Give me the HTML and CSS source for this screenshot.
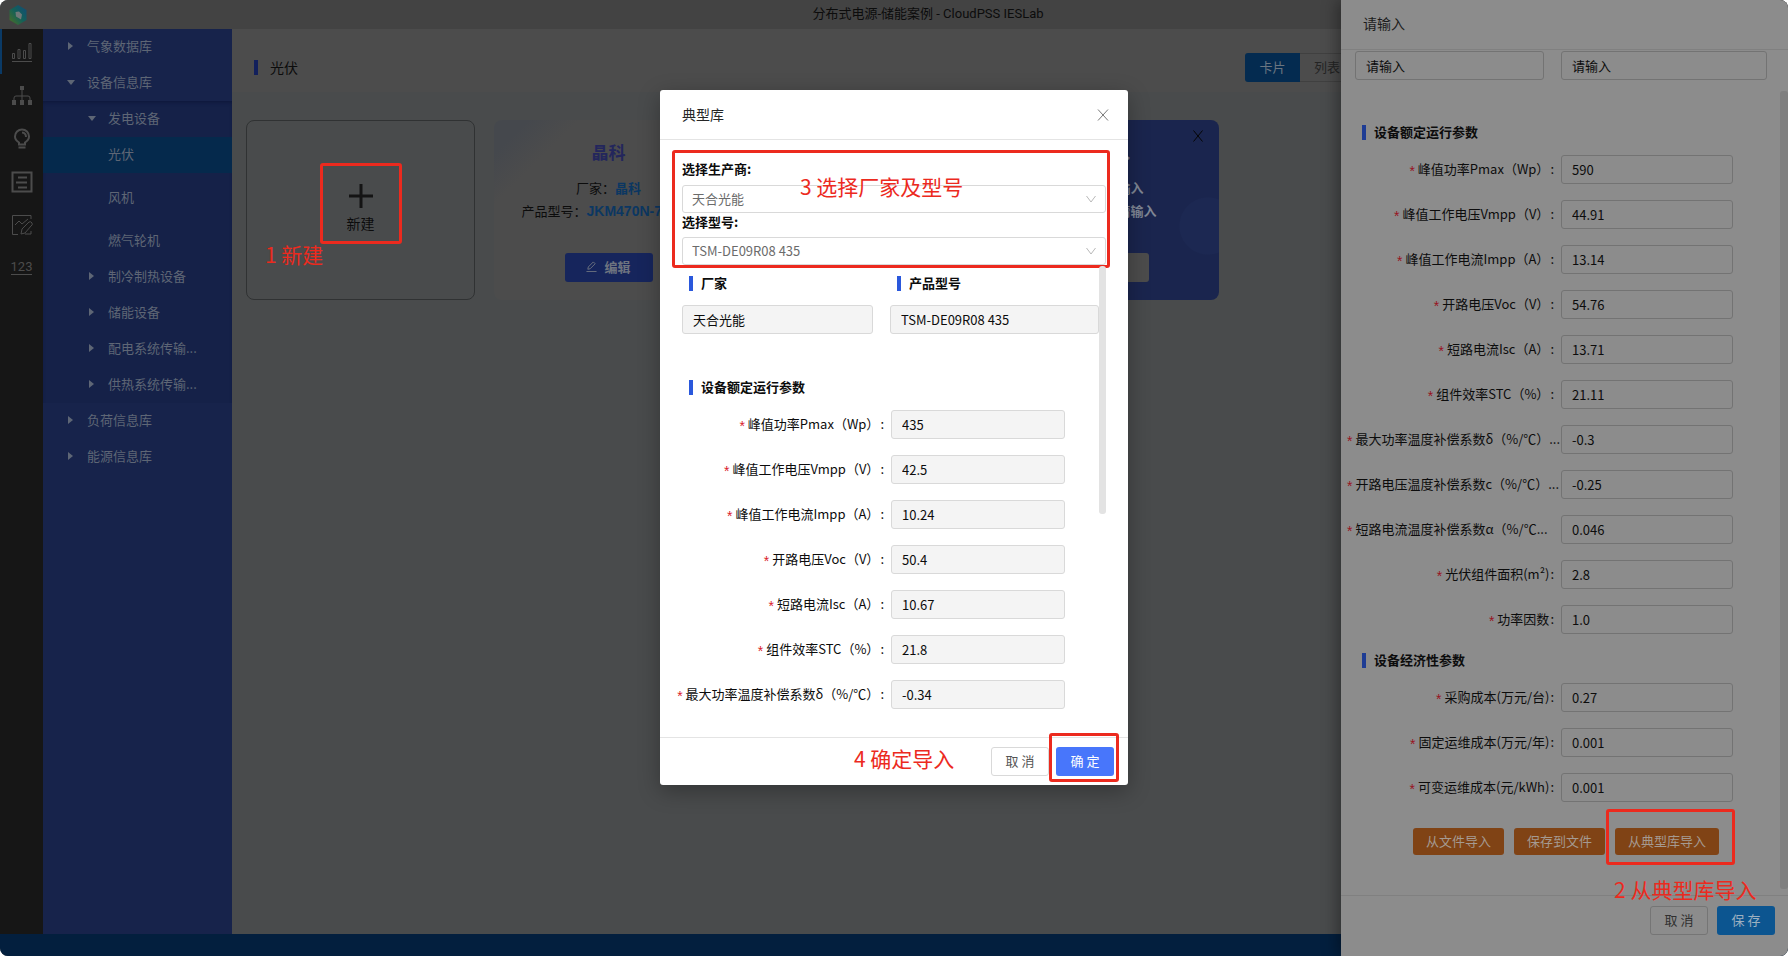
FILE: index.html
```html
<!DOCTYPE html>
<html lang="zh-CN">
<head>
<meta charset="utf-8">
<title>分布式电源-储能案例 - CloudPSS IESLab</title>
<link rel="stylesheet" href="styles.css">
</head>
<body>
<div class="window">
  <header class="titlebar">
    <svg class="logo" viewBox="0 0 18 20" aria-hidden="true">
      <defs><linearGradient id="lg" x1="1" y1="0" x2="0" y2="1"><stop offset="0" stop-color="#124a78"/><stop offset=".5" stop-color="#146058"/><stop offset="1" stop-color="#4f7020"/></linearGradient></defs>
      <path d="M9 0 17.500 5v10L9 20 .5 15V5z" fill="url(#lg)"/>
      <path d="M6.500 7 10 6.500l3 3-1 5-5-3z" fill="#6f7878"/>
    </svg>
    <h1 class="window-title">分布式电源-储能案例 - CloudPSS IESLab</h1>
  </header>

  <div class="workspace">
    <nav class="rail" aria-label="模块">
      <button class="rail-item current" aria-label="数据管理"><svg viewBox="0 0 22 22"><path d="M1.500 12.500h2v5h-2zM7 8.500h2v9H7zM12.500 9.500h2v8h-2zM18 2.500h2v15h-2zM1 20.500h20"/></svg></button>
      <button class="rail-item" aria-label="拓扑编辑"><svg viewBox="0 0 22 22"><path d="M11 4v12M3 16v-3q0-2 2-2h12q2 0 2 2v3"/><path class="fill" d="M9 1h4v4H9zM1 15h4v5H1zM9 15h4v5H9zM17 15h4v5h-4z"/></svg></button>
      <button class="rail-item" aria-label="方案"><svg class="bold" viewBox="0 0 22 22"><path d="M8 16.500v-2Q4 12 4 8.500a7 7 0 0 1 14 0q0 3.500-4 6v2zM11 4.500q4 .5 4 4.500M7.500 19.500h7"/></svg></button>
      <button class="rail-item" aria-label="报表"><svg class="bold" viewBox="0 0 22 22"><path d="M1.500 1.500h19v19h-19zM7 6.500h9M5 11.500h11M7 16.500h9"/></svg></button>
      <button class="rail-item" aria-label="评估"><svg viewBox="0 0 22 22"><path d="M20 5V1.500H1.500v19H7M4 11l4-4 3 3 6-5M10 20l1-5 7-7q2-1 3 1t-1 3l-6 7zM14 20h6v-3"/></svg></button>
      <button class="rail-item" aria-label="数值"><span class="digits">123</span></button>
    </nav>

    <nav class="menu" aria-label="信息库">
      <a class="menu-item" href="#"><i class="caret"></i>气象数据库</a>
      <a class="menu-item" href="#"><i class="caret open"></i>设备信息库</a>
      <div class="submenu">
        <a class="menu-item" href="#"><i class="caret open"></i>发电设备</a>
        <div class="leaves">
          <a class="menu-item active" href="#">光伏</a>
          <a class="menu-item" href="#">风机</a>
          <a class="menu-item" href="#">燃气轮机</a>
        </div>
        <a class="menu-item" href="#"><i class="caret"></i>制冷制热设备</a>
        <a class="menu-item" href="#"><i class="caret"></i>储能设备</a>
        <a class="menu-item" href="#"><i class="caret"></i>配电系统传输...</a>
        <a class="menu-item" href="#"><i class="caret"></i>供热系统传输...</a>
      </div>
      <a class="menu-item" href="#"><i class="caret"></i>负荷信息库</a>
      <a class="menu-item" href="#"><i class="caret"></i>能源信息库</a>
    </nav>

    <main class="content">
      <div class="content-head">
        <h2 class="page-title">光伏</h2>
        <div class="view-switch">
          <button class="view on">卡片</button><button class="view">列表</button>
        </div>
      </div>
      <div class="cards">
        <button class="card card-new">
          <svg class="plus" viewBox="0 0 24 24"><path d="M12 0v24M0 12h24"/></svg>
          新建
          <span class="mark mark-new"></span>
          <span class="note note-new">1 新建</span>
        </button>
        <article class="card card-light">
          <h3 class="card-name">晶科</h3>
          <p class="card-line">厂家：<b>晶科</b></p>
          <p class="card-line model">产品型号：<b>JKM470N-7</b></p>
          <button class="card-edit"><svg viewBox="0 0 12 12"><path d="M2 9l.5-2.500L8 1l2 2-5.500 5.500zM.5 11.500h11"/></svg>编辑</button>
        </article>
        <article class="card card-selected">
          <button class="card-close" aria-label="删除"><svg viewBox="0 0 12 12"><path d="M1.500.5l9 11M10.500.5l-9 11"/></svg></button>
          <h3 class="card-name">请输入</h3>
          <p class="card-line">厂家：<b>请输入</b></p>
          <p class="card-line">产品型号：<b>请输入</b></p>
          <button class="card-edit">编辑</button>
        </article>
      </div>
    </main>
  </div>
  <footer class="statusbar"></footer>

  <aside class="drawer">
    <h2 class="drawer-title">请输入</h2>
    <form class="drawer-body">
      <div class="pair">
        <input class="field" aria-label="厂家" value="请输入">
        <input class="field" aria-label="产品型号" value="请输入">
      </div>
      <h3 class="section">设备额定运行参数</h3>
      <div class="rows">
        <div class="row"><label for="d1">峰值功率Pmax（Wp）</label><input class="field" id="d1" value="590"></div>
        <div class="row"><label for="d2">峰值工作电压Vmpp（V）</label><input class="field" id="d2" value="44.91"></div>
        <div class="row"><label for="d3">峰值工作电流Impp（A）</label><input class="field" id="d3" value="13.14"></div>
        <div class="row"><label for="d4">开路电压Voc（V）</label><input class="field" id="d4" value="54.76"></div>
        <div class="row"><label for="d5">短路电流Isc（A）</label><input class="field" id="d5" value="13.71"></div>
        <div class="row"><label for="d6">组件效率STC（%）</label><input class="field" id="d6" value="21.11"></div>
        <div class="row"><label class="cut" for="d7">最大功率温度补偿系数δ（%/℃）...</label><input class="field" id="d7" value="-0.3"></div>
        <div class="row"><label class="cut" for="d8">开路电压温度补偿系数c（%/℃）...</label><input class="field" id="d8" value="-0.25"></div>
        <div class="row"><label class="cut" for="d9">短路电流温度补偿系数α（%/℃...</label><input class="field" id="d9" value="0.046"></div>
        <div class="row"><label for="d10">光伏组件面积(m²)</label><input class="field" id="d10" value="2.8"></div>
        <div class="row"><label for="d11">功率因数</label><input class="field" id="d11" value="1.0"></div>
      </div>
      <h3 class="section">设备经济性参数</h3>
      <div class="rows">
        <div class="row"><label for="e1">采购成本(万元/台)</label><input class="field" id="e1" value="0.27"></div>
        <div class="row"><label for="e2">固定运维成本(万元/年)</label><input class="field" id="e2" value="0.001"></div>
        <div class="row"><label for="e3">可变运维成本(元/kWh)</label><input class="field" id="e3" value="0.001"></div>
      </div>
      <div class="imports">
        <button type="button" class="import">从文件导入</button>
        <button type="button" class="import">保存到文件</button>
        <button type="button" class="import">从典型库导入<span class="mark mark-import"></span><span class="note note-import">2 从典型库导入</span></button>
      </div>
      <span class="scrollbar"></span>
    </form>
    <div class="drawer-foot">
      <button class="btn">取 消</button>
      <button class="btn primary">保 存</button>
    </div>
  </aside>

  <section class="modal" role="dialog" aria-labelledby="modal-title">
    <header class="modal-head">
      <h2 id="modal-title">典型库</h2>
      <button class="modal-close" aria-label="关闭"><svg viewBox="0 0 12 12"><path d="M1 .5l10 11M11 .5l-10 11"/></svg></button>
    </header>
    <div class="modal-body">
      <div class="pickers">
        <label class="pick-label" for="maker">选择生产商:</label>
        <div class="select"><select id="maker"><option>天合光能</option></select><svg viewBox="0 0 10 8"><path d="M.5 1 5 7l4.500-6"/></svg></div>
        <label class="pick-label" for="model">选择型号:</label>
        <div class="select"><select id="model"><option>TSM-DE09R08 435</option></select><svg viewBox="0 0 10 8"><path d="M.5 1 5 7l4.500-6"/></svg></div>
        <span class="mark mark-pick"></span>
        <span class="note note-pick">3 选择厂家及型号</span>
      </div>
      <div class="details">
        <div class="pair">
          <label class="section" for="m-maker">厂家</label>
          <label class="section" for="m-model">产品型号</label>
          <input class="field" id="m-maker" value="天合光能" readonly>
          <input class="field" id="m-model" value="TSM-DE09R08 435" readonly>
        </div>
        <h3 class="section">设备额定运行参数</h3>
        <div class="rows">
          <div class="row"><label for="m1">峰值功率Pmax（Wp）</label><input class="field" id="m1" value="435" readonly></div>
          <div class="row"><label for="m2">峰值工作电压Vmpp（V）</label><input class="field" id="m2" value="42.5" readonly></div>
          <div class="row"><label for="m3">峰值工作电流Impp（A）</label><input class="field" id="m3" value="10.24" readonly></div>
          <div class="row"><label for="m4">开路电压Voc（V）</label><input class="field" id="m4" value="50.4" readonly></div>
          <div class="row"><label for="m5">短路电流Isc（A）</label><input class="field" id="m5" value="10.67" readonly></div>
          <div class="row"><label for="m6">组件效率STC（%）</label><input class="field" id="m6" value="21.8" readonly></div>
          <div class="row"><label for="m7">最大功率温度补偿系数δ（%/℃）</label><input class="field" id="m7" value="-0.34" readonly></div>
        </div>
        <span class="scrollbar"></span>
      </div>
    </div>
    <footer class="modal-foot">
      <span class="note note-ok">4 确定导入</span>
      <button class="btn">取 消</button>
      <button class="btn primary">确 定<span class="mark mark-ok"></span></button>
    </footer>
  </section>
</div>
</body>
</html>
```
FILE: styles.css
```css
* { box-sizing: border-box; }
html, body { height: 100%; }
body {
  margin: 0;
  background: #fff;
  color: #0c0c0c;
  font: 13px/20px "Noto Sans CJK SC", "Noto Sans", sans-serif;
}
h1, h2, h3, p { margin: 0; font-size: inherit; font-weight: 400; }
button, input, select { font: inherit; color: inherit; margin: 0; }
button { padding: 0; border: 0; background: none; white-space: nowrap; }
a { color: inherit; text-decoration: none; }
svg { display: block; fill: none; stroke: currentColor; }

.window {
  position: relative;
  display: flex;
  flex-direction: column;
  height: 100vh;
  min-height: 956px;
  overflow: hidden;
  border-radius: 8px;
  background: #494b4c;
}

/* Title bar */
.titlebar {
  flex: none;
  display: flex;
  align-items: center;
  height: 29px;
  padding: 0 9px;
  background: #434343;
}
.logo { width: 18px; height: 20px; stroke: none; }
.window-title {
  flex: 1;
  padding: 0 0 2px 50px;
  text-align: center;
  line-height: 22px;
  font-family: Roboto, "Noto Sans CJK SC", sans-serif;
}

.workspace { flex: 1; display: flex; min-height: 0; }

/* Icon rail */
.rail { flex: none; width: 43px; background: #161616; color: #4c4c4c; }
.rail-item {
  display: flex;
  align-items: center;
  justify-content: center;
  width: 100%;
  height: 43px;
  border-left: 2px solid transparent;
  border-right: 2px solid transparent;
}
.rail-item.current { height: 45px; border-left-color: #0a3a66; }
.rail-item svg { width: 22px; height: 22px; }
.rail-item .bold { stroke-width: 2; }
.rail-item .fill { fill: currentColor; stroke: none; }
.digits { border-bottom: 1px solid; font: 13px/14px Roboto, sans-serif; }

/* Tree menu */
.menu { flex: none; width: 189px; background: #17234b; color: #5e6675; }
.menu-item {
  display: flex;
  align-items: center;
  gap: 14px;
  height: 36px;
  padding: 0 0 2px 25px;
}
.submenu { background: #152148; box-shadow: inset 0 3px 4px -2px #0d1638; }
.submenu .menu-item { padding-left: 46px; }
.leaves { display: flex; flex-direction: column; gap: 7px; }
.submenu .leaves .menu-item { padding-left: 65px; }
.leaves .active { background: #05294c; }
.caret {
  width: 5px;
  border-left: 5px solid;
  border-top: 4px solid transparent;
  border-bottom: 4px solid transparent;
}
.caret.open {
  width: 8px;
  margin: 0 -2px 0 -1px;
  border-left: 4px solid transparent;
  border-right: 4px solid transparent;
  border-top: 5px solid;
  border-bottom: 0;
}

/* Main area */
.content { flex: 1; min-width: 0; }
.content-head {
  display: flex;
  justify-content: space-between;
  align-items: center;
  height: 63px;
  padding: 14px 433px 0 22px;
  background: #4c4c4c;
}
.page-title { display: flex; align-items: center; gap: 12px; font-size: 14px; line-height: 18px; padding-bottom: 1px; }
.page-title::before { content: ""; width: 4px; height: 15px; background: #12205c; }
.view-switch { display: flex; }
.view {
  width: 55px;
  height: 29px;
  padding-bottom: 2px;
  border: 1px solid #404040;
  border-left: 0;
  color: #242424;
}
.view.on { border: 0; border-radius: 3px 0 0 3px; background: #042b50; color: #6a7580; }

.cards {
  display: grid;
  grid-template-columns: repeat(auto-fill, 229px);
  gap: 19px;
  padding: 28px 14px;
}
.card {
  position: relative;
  display: flex;
  flex-direction: column;
  align-items: center;
  height: 180px;
  border-radius: 8px;
}
.card-new {
  justify-content: center;
  gap: 5px;
  padding-bottom: 3px;
  border: 1px solid #303233;
  font-size: 14px;
}
.plus { width: 24px; height: 24px; stroke-width: 3; stroke: #141414; }
.card-light, .card-selected { padding: 20px 0 18px; }
.card-light { background: linear-gradient(135deg, #45484d 0 24px, #4c4c4c 60px); }
.card-selected {
  grid-column: 4;
  background: radial-gradient(circle at 218px 106px, #1c2852 0 28px, #1a254e 29px);
  color: #7f8694;
}
.card-name { margin-bottom: 13px; font-size: 17px; line-height: 24px; font-weight: 700; color: #23265c; }
.card-selected .card-name { color: inherit; }
.card-line { line-height: 22px; }
.card-line b { font-family: "Liberation Sans", "Noto Sans CJK SC", sans-serif; color: #0b3762; }
.card-line.model { width: 174px; white-space: nowrap; }
.card-line.model b { font-size: 14px; }
.card-selected b { color: inherit; }
.card-edit {
  display: flex;
  align-items: center;
  justify-content: center;
  gap: 7px;
  width: 88px;
  height: 29px;
  margin-top: auto;
  padding-bottom: 2px;
  border-radius: 3px;
  background: #16255c;
  color: #6e7480;
  font-weight: 700;
}
.card-edit svg { width: 11px; height: 11px; }
.card-selected .card-edit { background: #4c4c4c; color: #17234b; }
.card-close { position: absolute; top: 10px; right: 15px; color: #050505; }
.card-close svg { width: 12px; height: 12px; }

.statusbar { flex: none; height: 22px; background: #031f3e; }

/* Shared form pieces */
.field {
  width: 100%;
  min-width: 0;
  height: 29px;
  padding: 0 10px;
  border: 1px solid #737373;
  border-radius: 3px;
  background: transparent;
  outline: 0;
}
.section { display: flex; align-items: center; gap: 8px; padding-left: 7px; line-height: 20px; font-weight: 700; }
.section::before { content: ""; width: 4px; height: 15px; background: #1e3c94; }
.rows { display: grid; gap: 16px; }
.row { display: grid; align-items: center; }
.row label { display: flex; justify-content: flex-end; white-space: nowrap; }
.row label::before { content: "*"; margin-right: 3px; padding-top: 2px; font-family: "Liberation Sans", sans-serif; font-size: 14px; color: #98131f; }
.row label::after { content: ":"; margin: 0 7px 0 1px; }
.row .cut { justify-content: flex-start; margin-left: -8px; }
.row .cut::after { content: none; }
.btn {
  position: relative;
  width: 58px;
  height: 29px;
  padding-bottom: 2px;
  border: 1px solid #757575;
  border-radius: 3px;
  color: #303030;
}
.scrollbar { position: absolute; border-radius: 3px; }

/* Right drawer */
.drawer {
  position: absolute;
  inset: 0 0 0 auto;
  display: flex;
  flex-direction: column;
  width: 25%;
  min-width: 440px;
  background: #8c8c8c;
  box-shadow: -4px 0 14px rgba(0, 0, 0, .35);
}
.drawer-title {
  flex: none;
  height: 50px;
  padding-left: 22px;
  border-bottom: 1px solid #808080;
  font-size: 14px;
  line-height: 47px;
  color: #1c1c1c;
}
.drawer-body { position: relative; flex: 1; padding: 1px 21px 0 14px; }
.drawer-body .pair { display: grid; grid-template-columns: 189px 1fr; gap: 17px; margin-bottom: 42px; }
.drawer-body .section { margin-bottom: 13px; }
.drawer-body .rows { margin-bottom: 16px; }
.drawer-body .row { grid-template-columns: 206px 172px; }
.imports { display: flex; gap: 10px; padding: 10px 0 0 58px; }
.import {
  position: relative;
  height: 27px;
  padding: 0 13px 1px;
  border-radius: 3px;
  background: #804315;
  color: #a59a91;
}
.drawer-body .scrollbar { top: 41px; right: 0; bottom: 6px; width: 8px; background: #7f7f7f; }
.drawer-foot {
  flex: none;
  display: flex;
  justify-content: flex-end;
  gap: 9px;
  height: 61px;
  padding: 10px 13px 0;
  border-top: 1px solid #808080;
}
.drawer .primary { border: 0; background: #0c5590; color: #9db0c0; }

/* Library dialog */
.modal {
  position: absolute;
  top: 90px;
  left: 50%;
  width: 468px;
  margin-left: -234px;
  border-radius: 3px;
  background: #fff;
  box-shadow: 0 6px 22px rgba(0, 0, 0, .3);
}
.modal-head {
  display: flex;
  justify-content: space-between;
  align-items: center;
  height: 50px;
  padding: 0 19px 0 22px;
  border-bottom: 1px solid #e4e4e4;
  font-size: 14px;
  color: #262626;
}
.modal-head h2 { padding-bottom: 2px; }
.modal-close svg { width: 12px; height: 12px; color: #777; }
.modal-body { padding: 19px 22px 28px; }
.pickers { position: relative; display: grid; }
.pick-label { line-height: 20px; margin-bottom: 6px; font-weight: 700; }
.select { position: relative; }
.select select {
  display: block;
  width: 100%;
  height: 28px;
  padding: 0 9px;
  border: 1px solid #d9d9d9;
  border-radius: 3px;
  background: #fff;
  color: #6b6b6b;
  appearance: none;
}
.select svg { position: absolute; top: 10px; right: 10px; width: 10px; height: 8px; color: #b8b8b8; }
.select + .pick-label { margin: 0 0 6px; line-height: 18px; }
.details { position: relative; padding: 8px 7px 0 0; }
.details .pair { display: grid; grid-template-columns: 191px 1fr; gap: 12px 17px; margin-bottom: 43px; }
.details .section::before { background: #2a58dc; }
.details h3.section { margin-bottom: 13px; }
.details .row { grid-template-columns: 209px 174px; }
.details .row label::before { color: #d9202c; }
.details .field { border-color: #d9d9d9; background: #f4f4f4; }
.details .scrollbar { top: 1px; right: 0; width: 7px; height: 248px; background: #e3e3e3; }
.modal-foot {
  position: relative;
  display: flex;
  justify-content: flex-end;
  gap: 7px;
  padding: 9px 14px;
  border-top: 1px solid #e4e4e4;
}
.modal .btn { border-color: #d9d9d9; color: #555; }
.modal .primary { border: 0; background: #4876fb; color: #fff; }

/* Tutorial callouts drawn over the interface */
.mark { position: absolute; border: 3px solid #ec2a1e; border-radius: 3px; pointer-events: none; }
.note {
  position: absolute;
  color: #ec2a1e;
  font-size: 21px;
  line-height: 28px;
  white-space: nowrap;
}
.mark-new { top: 42px; left: 73px; width: 82px; height: 81px; }
.note-new { top: 119px; left: 18px; }
.mark-pick { inset: -9px -4px -3px -10px; }
.note-pick { top: 13px; left: 118px; }
.mark-import { inset: -19px -16px -10px -9px; }
.note-import { top: 47px; left: -1px; }
.mark-ok { inset: -14px -5px -6px -7px; }
.note-ok { top: 6px; left: 194px; }
```
